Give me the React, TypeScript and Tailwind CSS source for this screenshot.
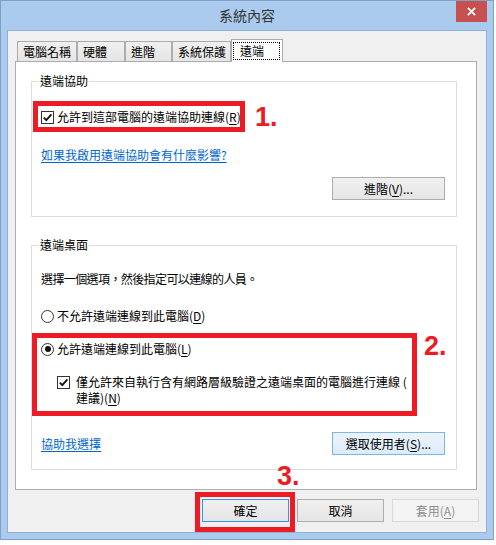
import type { ReactNode } from "react";

const tabs = [
  { label: "電腦名稱", w: "w-[60px]" },
  { label: "硬體", w: "w-[48px]" },
  { label: "進階", w: "w-[47px]" },
  { label: "系統保護", w: "w-[59px]" },
];

function Key({ k }: { k: string }) {
  return (
    <>
      (<span className="underline underline-offset-2">{k}</span>)
    </>
  );
}

function CheckBox() {
  return (
    <span className="flex h-[13px] w-[13px] shrink-0 items-center justify-center border border-[#333] bg-white">
      <svg viewBox="0 0 11 11" className="h-[11px] w-[11px]">
        <path d="M1.8 5.6 L4.3 8.2 L9.4 2.3" fill="none" stroke="#111" strokeWidth="1.8" />
      </svg>
    </span>
  );
}

function Radio({ checked }: { checked?: boolean }) {
  return (
    <span className="flex h-[13px] w-[13px] shrink-0 items-center justify-center rounded-full border border-[#333] bg-white">
      {checked && <span className="h-[6px] w-[6px] rounded-full bg-[#111]" />}
    </span>
  );
}

function Button({
  children,
  w,
  tone = "normal",
}: {
  children: ReactNode;
  w: string;
  tone?: "normal" | "default" | "hover" | "disabled";
}) {
  const look = {
    normal: "border-[#adadad] bg-gradient-to-b from-[#f0f0f0] to-[#e5e5e5] text-black",
    default: "border-[#3c94e6] bg-gradient-to-b from-[#f0f0f0] to-[#e5e5e5] text-black",
    hover: "border-[#7eb4ea] bg-gradient-to-b from-[#ecf4fc] to-[#dcecfc] text-black",
    disabled: "border-[#d9d9d9] bg-[#f4f4f4] text-[#8d8d8d]",
  }[tone];
  return (
    <div className={`flex h-[23px] ${w} items-center justify-center border text-[12px] leading-[16px] ${look}`}>
      <span>{children}</span>
    </div>
  );
}

function Group({ title, h, mt, children }: { title: string; h: string; mt: string; children: ReactNode }) {
  return (
    <div className={`ml-[15px] ${mt} ${h} w-[426px] border border-[#dcdcdc] flex flex-col`}>
      <div className="-mt-[9px] ml-[7px] w-fit bg-white px-[1px] text-[12px] leading-[16px]">{title}</div>
      {children}
    </div>
  );
}

function Mark({ n, className }: { n: string; className: string }) {
  return (
    <span
      className={`absolute font-['Liberation_Sans',Arial,sans-serif] text-[27px] font-bold leading-none text-[#ed1c24] ${className}`}
    >
      {n}
    </span>
  );
}

export default function App() {
  return (
    <div className="relative flex h-[540px] w-[494px] flex-col border border-[#7f9fc5] bg-[#aacbee] font-['Noto_Sans_CJK_TC','Microsoft_JhengHei',sans-serif] text-black">
      {/* title bar */}
      <div className="flex h-[29px] shrink-0 items-center justify-center text-[14px] text-[#333]">
        系統內容
      </div>
      <div className="absolute right-[6px] top-0 flex h-[21px] w-[31px] items-center justify-center bg-[#c75050]">
        <svg viewBox="0 0 10 10" className="h-[9px] w-[9px]">
          <path d="M1 1 L9 9 M9 1 L1 9" stroke="white" strokeWidth="2" />
        </svg>
      </div>

      {/* client */}
      <div className="mx-[6px] mb-[6px] flex flex-1 flex-col border border-[#8fb2d8] bg-[#f0f0f0]">
        <div className="relative z-10 ml-[9px] mt-[8px] flex h-[22px] items-end">
          {tabs.map((t) => (
            <div
              key={t.label}
              className={`${t.w} flex h-[20px] items-center border border-b-0 border-[#acacac] bg-gradient-to-b from-[#f0f0f0] to-[#e5e5e5] pl-[5px] text-[12px] leading-[16px]`}
            >
              {t.label}
            </div>
          ))}
          <div className="-mb-px flex h-[23px] w-[52px] items-start border border-b-0 border-[#acacac] bg-white">
            <span className="ml-[1px] mt-[2px] flex h-[18px] w-[47px] items-center border border-dotted border-black pl-[6px] text-[12px] leading-[16px]">
              遠端
            </span>
          </div>
        </div>

        <div className="ml-[7px] flex h-[429px] w-[462px] flex-col border border-[#adadad] bg-white">
          <Group title="遠端協助" mt="mt-[19px]" h="h-[136px]">
            <div className="ml-[9px] mt-[20px] flex h-[16px] items-center gap-[3px] text-[12px] leading-[16px]">
              <CheckBox />
              <span>
                允許到這部電腦的遠端協助連線<Key k="R" />
              </span>
            </div>
            <div className="ml-[9px] mt-[22px] h-[16px] text-[12px] leading-[16px] text-[#0066cc] underline underline-offset-2">
              如果我啟用遠端協助會有什麼影響?
            </div>
            <div className="mr-[11px] mt-[14px] flex justify-end">
              <Button w="w-[113px]">
                進階<Key k="V" />...
              </Button>
            </div>
          </Group>

          <Group title="遠端桌面" mt="mt-[28px]" h="h-[225px]">
            <div className="ml-[9px] mt-[18px] h-[16px] text-[12px] leading-[16px] tracking-[-0.6px]">
              選擇一個選項，然後指定可以連線的人員。
            </div>
            <div className="ml-[9px] mt-[21px] flex h-[16px] items-center gap-[3px] text-[12px] leading-[16px]">
              <Radio />
              <span>
                不允許遠端連線到此電腦<Key k="D" />
              </span>
            </div>
            <div className="ml-[9px] mt-[17px] flex h-[16px] items-center gap-[3px] text-[12px] leading-[16px]">
              <Radio checked />
              <span>
                允許遠端連線到此電腦<Key k="L" />
              </span>
            </div>
            <div className="ml-[25px] mt-[17px] flex gap-[6px] text-[12px] leading-[16px]">
              <span className="mt-[2px]">
                <CheckBox />
              </span>
              <span>
                僅允許來自執行含有網路層級驗證之遠端桌面的電腦進行連線 (
                <br />
                建議)<Key k="N" />
              </span>
            </div>
            <div className="ml-[9px] mr-[11px] mt-[26px] flex items-center justify-between">
              <span className="text-[12px] leading-[16px] text-[#0066cc] underline underline-offset-2">協助我選擇</span>
              <Button w="w-[113px]" tone="hover">
                選取使用者<Key k="S" />...
              </Button>
            </div>
          </Group>
        </div>

        <div className="mr-[7px] mt-[9px] flex justify-end gap-[8px]">
          <Button w="w-[87px]" tone="default">
            確定
          </Button>
          <Button w="w-[87px]">取消</Button>
          <Button w="w-[87px]" tone="disabled">
            套用<Key k="A" />
          </Button>
        </div>
      </div>

      {/* annotations */}
      <div className="absolute left-[32px] top-[100px] h-[31px] w-[212px] border-[5px] border-[#ed1c24]" />
      <div className="absolute left-[31px] top-[332px] h-[83px] w-[385px] border-[5px] border-[#ed1c24]" />
      <div className="absolute left-[194px] top-[491px] h-[40px] w-[100px] border-[5px] border-[#ed1c24]" />
      <Mark n="1." className="left-[254px] top-[103px]" />
      <Mark n="2." className="left-[423px] top-[332px]" />
      <Mark n="3." className="left-[276px] top-[462px]" />
    </div>
  );
}
